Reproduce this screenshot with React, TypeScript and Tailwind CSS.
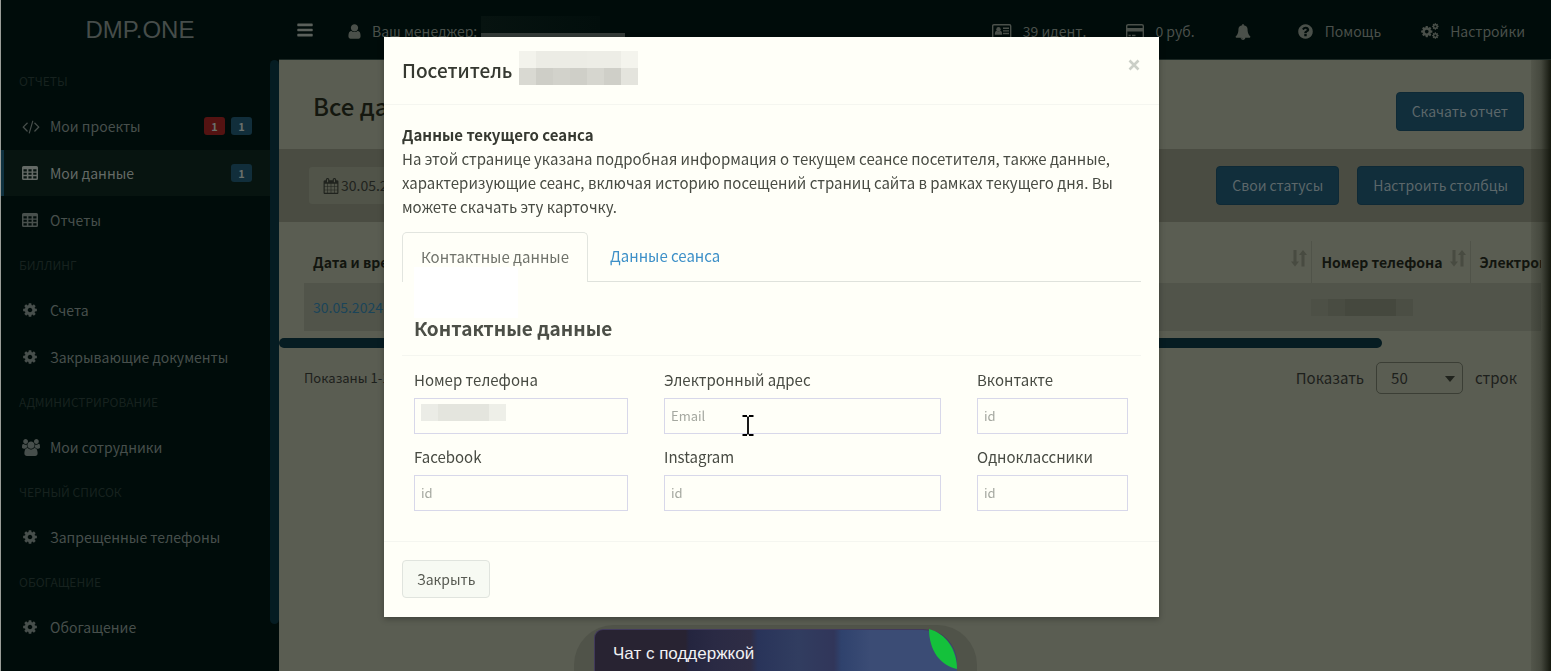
import { useState } from "react";
import type { ReactNode } from "react";
import clsx from "clsx";

const COG =
  "M1152 896q0-106-75-181t-181-75-181 75-75 181 75 181 181 75 181-75 75-181zm512-109v222q0 12-8 23t-20 13l-185 28q-19 54-39 91 35 50 107 138 10 12 10 25t-9 23q-27 37-99 108t-94 71q-12 0-26-9l-138-108q-44 23-91 38-16 136-29 186-7 28-36 28h-222q-14 0-24.5-8.5t-11.5-21.5l-28-184q-49-16-90-37l-141 107q-10 9-25 9-14 0-25-11-126-114-165-168-7-10-7-23 0-12 8-23 15-21 51-66.5t54-70.5q-27-50-41-99l-183-27q-13-2-21-12.5t-8-23.5v-222q0-12 8-23t19-13l186-28q14-46 39-92-40-57-107-138-10-12-10-24 0-10 9-23 26-36 98.5-107.5t94.5-71.5q13 0 26 10l138 107q44-23 91-38 16-136 29-186 7-28 36-28h222q14 0 24.5 8.5t11.5 21.5l28 184q49 16 90 37l142-107q9-9 24-9 13 0 25 10 129 119 165 170 7 8 7 22 0 12-8 23-15 21-51 66.5t-54 70.5q26 50 41 98l183 28q13 2 21 12.5t8 23.5z";

const PATHS = {
  cog: COG,
  bars: "M1664 1344v128q0 26-19 45t-45 19h-1408q-26 0-45-19t-19-45v-128q0-26 19-45t45-19h1408q26 0 45 19t19 45zm0-512v128q0 26-19 45t-45 19h-1408q-26 0-45-19t-19-45v-128q0-26 19-45t45-19h1408q26 0 45 19t19 45zm0-512v128q0 26-19 45t-45 19h-1408q-26 0-45-19t-19-45v-128q0-26 19-45t45-19h1408q26 0 45 19t19 45z",
  user: "M1536 1399q0 109-62.5 187t-150.5 78h-854q-88 0-150.5-78t-62.5-187q0-85 8.5-160.5t31.5-152 58.5-131 94-89 134.5-34.5q131 128 313 128t313-128q76 0 134.5 34.5t94 89 58.5 131 31.5 152 8.5 160.5zm-256-887q0 159-112.5 271.5t-271.5 112.5-271.5-112.5-112.5-271.5 112.5-271.5 271.5-112.5 271.5 112.5 112.5 271.5z",
  users:
    "M593 896q-162 5-265 128h-134q-82 0-138-40.5t-56-118.5q0-353 124-353 6 0 43.5 21t97.5 42.5 119 21.5q67 0 133-23-5 37-5 66 0 143 81 259zm1071 637q0 120-73 189.5t-194 69.5h-874q-121 0-194-69.5t-73-189.5q0-53 3.5-103.5t14-109 26.5-108.5 43-97.5 62-81 85.5-53.5 111.5-20q10 0 43 21.5t73 48 107 48 135 21.5 135-21.5 107-48 73-48 43-21.5q61 0 111.5 20t85.5 53.5 62 81 43 97.5 26.5 108.5 14 109 3.5 103.5zm-1024-1277q0 106-75 181t-181 75-181-75-75-181 75-181 181-75 181 75 75 181zm704 384q0 159-112.5 271.5t-271.5 112.5-271.5-112.5-112.5-271.5 112.5-271.5 271.5-112.5 271.5 112.5 112.5 271.5zm576 225q0 78-56 118.5t-138 40.5h-134q-103-123-265-128 81-116 81-259 0-29-5-66 66 23 133 23 59 0 119-21.5t97.5-42.5 43.5-21q124 0 124 353zm-128-609q0 106-75 181t-181 75-181-75-75-181 75-181 181-75 181 75 75 181z",
  bell: "M912 1696q0-16-16-16-59 0-101.5-42.5t-42.5-101.5q0-16-16-16t-16 16q0 73 51.5 124.5t124.5 51.5q16 0 16-16zm816-288q0 52-38 90t-90 38h-448q0 106-75 181t-181 75-181-75-75-181h-448q-52 0-90-38t-38-90q50-42 91-88t85-119.5 74.5-158.5 50-206 19.5-260q0-152 117-282.5t307-158.5q-8-19-8-39 0-40 28-68t68-28 68 28 28 68q0 20-8 39 190 28 307 158.5t117 282.5q0 139 19.5 260t50 206 74.5 158.5 85 119.5 91 88z",
  question:
    "M1024 1376v-192q0-14-9-23t-23-9h-192q-14 0-23 9t-9 23v192q0 14 9 23t23 9h192q14 0 23-9t9-23zm256-672q0-88-55.5-163t-138.5-116-170-41q-243 0-371 213-15 24 8 42l132 100q7 6 19 6 16 0 25-12 53-68 86-92 34-24 86-24 48 0 85.5 26t37.5 59q0 38-20 61t-68 45q-63 28-115.5 86.5t-52.5 125.5v36q0 14 9 23t23 9h192q14 0 23-9t9-23q0-19 21.5-49.5t54.5-49.5q32-18 49-28.5t46-35 44.5-48 28-60.5 12.5-81zm384 192q0 209-103 385.5t-279.5 279.5-385.5 103-385.5-103-279.5-279.5-103-385.5 103-385.5 279.5-279.5 385.5-103 385.5 103 279.5 279.5 103 385.5z",
  code: "M617 1399l-50 50q-10 10-23 10t-23-10l-466-466q-10-10-10-23t10-23l466-466q10-10 23-10t23 10l50 50q10 10 10 23t-10 23l-393 393 393 393q10 10 10 23t-10 23zm591-1067l-373 1291q-4 13-15.5 19.5t-23.5 2.5l-62-17q-13-4-19.5-15.5t-2.5-24.5l373-1291q4-13 15.5-19.5t23.5-2.5l62 17q13 4 19.5 15.5t2.5 24.5zm657 651l-466 466q-10 10-23 10t-23-10l-50-50q-10-10-10-23t10-23l393-393-393-393q-10-10-10-23t10-23l50-50q10-10 23-10t23 10l466 466q10 10 10 23t-10 23z",
  calendar:
    "M192 1664h288v-288h-288v288zm352 0h320v-288h-320v288zm-352-352h288v-320h-288v320zm352 0h320v-320h-320v320zm-352-384h288v-288h-288v288zm736 736h320v-288h-320v288zm-384-736h320v-288h-320v288zm768 736h288v-288h-288v288zm-384-352h320v-320h-320v320zm-352-864v-288q0-13-9.5-22.5t-22.5-9.5h-64q-13 0-22.5 9.5t-9.5 22.5v288q0 13 9.5 22.5t22.5 9.5h64q13 0 22.5-9.5t9.5-22.5zm736 864h288v-320h-288v320zm-384-384h320v-288h-320v288zm384 0h288v-288h-288v288zm32-480v-288q0-13-9.5-22.5t-22.5-9.5h-64q-13 0-22.5 9.5t-9.5 22.5v288q0 13 9.5 22.5t22.5 9.5h64q13 0 22.5-9.5t9.5-22.5zm384-64v1280q0 52-38 90t-90 38h-1408q-52 0-90-38t-38-90v-1280q0-52 38-90t90-38h128v-96q0-66 47-113t113-47h64q66 0 113 47t47 113v96h384v-96q0-66 47-113t113-47h64q66 0 113 47t47 113v96h128q52 0 90 38t38 90z",
};

type IconName = keyof typeof PATHS;

function Icon({ name, className }: { name: IconName; className?: string }) {
  const wide = name === "users" || name === "code";
  return (
    <svg
      viewBox={wide ? "0 0 1920 1792" : "0 0 1792 1792"}
      className={clsx("shrink-0", className)}
      fill="currentColor"
      aria-hidden="true"
    >
      <path d={PATHS[name]} />
    </svg>
  );
}

function TableIcon() {
  return (
    <svg viewBox="0 0 16 14" className="h-[14px] w-4 shrink-0" aria-hidden="true">
      <path
        fill="currentColor"
        fillRule="evenodd"
        d="M1.500 0h13A1.500 1.500 0 0 1 16 1.500v11a1.500 1.500 0 0 1-1.500 1.500h-13A1.500 1.500 0 0 1 0 12.500v-11A1.500 1.500 0 0 1 1.500 0zM1.500 3.200v2.200h3.300V3.200zm4.900 0v2.200h3.200V3.200zm4.800 0v2.200h3.300V3.200zM1.500 6.800v2h3.300v-2zm4.900 0v2h3.200v-2zm4.800 0v2h3.300v-2zM1.500 10.300v2.200h3.300v-2.200zm4.900 0v2.200h3.200v-2.200zm4.800 0v2.200h3.300v-2.200z"
      />
    </svg>
  );
}

function IdCardIcon() {
  return (
    <svg viewBox="0 0 20 16" className="h-4 w-5 shrink-0" aria-hidden="true">
      <rect x="0.700" y="0.700" width="18" height="14" rx="1.200" fill="none" stroke="currentColor" strokeWidth="1.400" />
      <g fill="currentColor">
        <circle cx="6.500" cy="5.300" r="2.200" />
        <path d="M2.800 10.800c0-2.800.8-4.100 2-4.100.9.900 2.500.9 3.400 0 1.200 0 2 1.300 2 4.100z" />
        <path d="M11 3.600h6v1.400h-6zM11 6.200h6v1.400h-6zM11 8.800h6v1.400h-6z" />
      </g>
    </svg>
  );
}

function CreditCardIcon() {
  return (
    <svg viewBox="0 0 18 16" className="h-4 w-[18px] shrink-0" aria-hidden="true">
      <rect x="0.700" y="0.700" width="16.600" height="14" rx="1.400" fill="none" stroke="currentColor" strokeWidth="1.400" />
      <path fill="currentColor" d="M1 4h16v3.500H1zM2.500 10.800h2.300v1.400H2.500zM6 10.800h3.500v1.400H6z" />
    </svg>
  );
}

function CogsIcon() {
  return (
    <svg viewBox="0 0 18 17" className="h-[17px] w-[18px] shrink-0" fill="currentColor" aria-hidden="true">
      <path d={COG} transform="translate(-0.800 2) scale(0.0073)" />
      <path d={COG} transform="translate(10.600 -0.300) scale(0.0042)" />
      <path d={COG} transform="translate(10.600 8.800) scale(0.0042)" />
    </svg>
  );
}

function SortIcon() {
  return (
    <svg viewBox="0 0 16 17" className="h-[17px] w-4 shrink-0 text-[#484b41]" aria-hidden="true">
      <path
        fill="currentColor"
        d="M2.500 0h3v11.500H8L4 16.500 0 11.500h2.500zM10.500 16.500h3V5H16L12 0 8 5h2.500z"
      />
    </svg>
  );
}

type Badge = { text: string; tone: "red" | "blue" };

type MenuItem = {
  label: string;
  icon: IconName | "table";
  active?: boolean;
  badges?: Badge[];
};

const menu: { title: string; items: MenuItem[] }[] = [
  {
    title: "ОТЧЕТЫ",
    items: [
      {
        label: "Мои проекты",
        icon: "code",
        badges: [
          { text: "1", tone: "red" },
          { text: "1", tone: "blue" },
        ],
      },
      {
        label: "Мои данные",
        icon: "table",
        active: true,
        badges: [{ text: "1", tone: "blue" }],
      },
      { label: "Отчеты", icon: "table" },
    ],
  },
  {
    title: "БИЛЛИНГ",
    items: [
      { label: "Счета", icon: "cog" },
      { label: "Закрывающие документы", icon: "cog" },
    ],
  },
  { title: "АДМИНИСТРИРОВАНИЕ", items: [{ label: "Мои сотрудники", icon: "users" }] },
  { title: "ЧЕРНЫЙ СПИСОК", items: [{ label: "Запрещенные телефоны", icon: "cog" }] },
  { title: "ОБОГАЩЕНИЕ", items: [{ label: "Обогащение", icon: "cog" }] },
];

function Sidebar() {
  return (
    <aside className="flex w-[279px] shrink-0 flex-col border-l border-[#9a9d98] bg-[#000c0a]">
      <a
        href="#"
        className="flex h-[59px] items-center justify-center font-['Liberation_Sans',sans-serif] text-2xl text-[#464d4a]"
      >
        DMP.ONE
      </a>
      <div className="flex flex-1 items-start">
        <nav className="min-w-0 flex-1">
          {menu.map((group) => (
            <section key={group.title}>
              <h2 className="flex h-11 items-center pl-[18px] text-[12px] text-[#17221f]">
                {group.title}
              </h2>
              <ul className="flex flex-col gap-px">
                {group.items.map((item) => (
                  <li key={item.label}>
                    <a
                      href="#"
                      className={clsx(
                        "flex h-[46px] items-center border-l-[3px] pr-[18px] pl-[18px] text-[14px]",
                        item.active
                          ? "border-[#0f3240] bg-[#071410] text-[#646a66]"
                          : "border-transparent text-[#474f4c]",
                      )}
                    >
                      <span className="flex w-7 items-center">
                        {item.icon === "table" ? (
                          <TableIcon />
                        ) : (
                          <Icon
                            name={item.icon}
                            className={item.icon === "cog" ? "h-4 w-4" : "h-[17px] w-[18px]"}
                          />
                        )}
                      </span>
                      <span className="flex-1 whitespace-nowrap">{item.label}</span>
                      <span className="flex gap-1.5">
                        {item.badges?.map((badge) => (
                          <span
                            key={badge.tone}
                            className={clsx(
                              "flex h-[18px] w-[21px] items-center justify-center rounded-[3px] text-[11px] font-bold text-[#6a706c]",
                              badge.tone === "red" ? "bg-[#541312]" : "bg-[#112e3b]",
                            )}
                          >
                            {badge.text}
                          </span>
                        ))}
                      </span>
                    </a>
                  </li>
                ))}
              </ul>
            </section>
          ))}
        </nav>
        <div className="mt-px h-[564px] w-[9px] rounded-full bg-[#051c22]" />
      </div>
    </aside>
  );
}

function HeaderLink({ icon, children }: { icon: ReactNode; children: ReactNode }) {
  return (
    <a href="#" className="flex items-center gap-[11px] whitespace-nowrap">
      {icon}
      {children}
    </a>
  );
}

function Header() {
  return (
    <header className="flex h-[59px] items-center bg-[#000c0a] pt-1 pr-[26px] pl-[17px] text-[14px] text-[#4a504a]">
      <button type="button" aria-label="Меню" className="pb-[3px] text-[#5a605b]">
        <Icon name="bars" className="h-[18px] w-[18px]" />
      </button>
      <div className="ml-8 flex items-center gap-[9px] whitespace-nowrap">
        <Icon name="user" className="h-[17px] w-[17px]" />
        Ваш менеджер:
      </div>
      <div className="mt-3 ml-1 h-[21px] w-36 self-start border-b-4 border-[#343b38]">
        <div className="h-full w-[119px] bg-linear-to-r from-[#071310] to-[#020e0c]" />
      </div>
      <div className="ml-auto flex items-center gap-10">
        <HeaderLink icon={<IdCardIcon />}>39 идент.</HeaderLink>
        <HeaderLink icon={<CreditCardIcon />}>0 руб.</HeaderLink>
        <button type="button" aria-label="Уведомления" className="mr-1.5">
          <Icon name="bell" className="h-4 w-4" />
        </button>
        <HeaderLink icon={<Icon name="question" className="h-[17px] w-[17px]" />}>Помощь</HeaderLink>
        <HeaderLink icon={<CogsIcon />}>Настройки</HeaderLink>
      </div>
    </header>
  );
}

function BlueButton({ children }: { children: ReactNode }) {
  return (
    <button
      type="button"
      className="h-[39px] rounded-[4px] border border-[#0e2936] bg-[#112e3b] px-[15px] text-[14px] whitespace-nowrap text-[#5c676a]"
    >
      {children}
    </button>
  );
}

function Content() {
  return (
    <main className="relative flex-1 border-t border-[#1b2723] bg-[#5a5d52] text-[#1d201c]">
      <div className="flex h-[89px] items-start justify-between pt-7 pr-[27px] pl-[34px]">
        <h1 className="text-2xl leading-9 font-medium whitespace-nowrap text-[#14170f]">
          Все данные
        </h1>
        <div className="pt-1">
          <BlueButton>Скачать отчет</BlueButton>
        </div>
      </div>

      <div className="flex h-[73px] items-center gap-[18px] bg-[#4a4c42] pr-[27px] pl-[30px]">
        <button
          type="button"
          className="mr-auto flex h-[37px] items-center gap-0.5 rounded-[3px] bg-[#515449] px-[14px] text-[14px] whitespace-nowrap text-[#20231e]"
        >
          <Icon name="calendar" className="h-4 w-4" />
          30.05.2024
        </button>
        <BlueButton>Свои статусы</BlueButton>
        <BlueButton>Настроить столбцы</BlueButton>
      </div>

      <div className="mr-[10px] ml-[25px] overflow-hidden pt-[19px]">
        <table className="w-full table-fixed text-left text-[14px] whitespace-nowrap">
          <thead>
            <tr className="h-[42px] text-[#12150f]">
              <th className="px-[9px] font-bold">Дата и время</th>
              <th className="border-r border-[#505349] pr-1">
                <div className="-mt-2 flex justify-end">
                  <SortIcon />
                </div>
              </th>
              <th className="w-[159px] border-r border-[#505349] pr-1 pl-[10px] font-bold">
                <div className="flex justify-between">
                  Номер телефона
                  <span className="-mt-0.5">
                    <SortIcon />
                  </span>
                </div>
              </th>
              <th className="w-[71px] overflow-hidden pl-[9px] font-bold">Электронный адрес</th>
            </tr>
          </thead>
          <tbody>
            <tr className="h-12 bg-[#51544a]">
              <td className="px-[9px]">
                <a href="#" className="text-[#1b4459]">
                  30.05.2024
                </a>
              </td>
              <td />
              <td>
                <div className="flex h-[17px] w-[102px]">
                  <span className="w-[17px] bg-[#4d5046]" />
                  <span className="w-[17px] bg-[#494c42]" />
                  <span className="w-[51px] bg-[#45483e]" />
                  <span className="w-[17px] bg-[#4b4e44]" />
                </div>
              </td>
              <td />
            </tr>
          </tbody>
        </table>
      </div>

      <div className="mt-[7px] mr-[169px] h-[10px] rounded-full bg-[#061c22]" />

      <div className="mt-[14px] flex items-center pr-[34px] pl-[25px] whitespace-nowrap">
        <p className="mr-auto text-[13px]">Показаны 1-1 из 1</p>
        <label htmlFor="page-size" className="text-[15px]">
          Показать
        </label>
        <div className="relative mx-3">
          <select
            id="page-size"
            className="h-8 w-[87px] appearance-none rounded-[5px] border border-[#3b3e35] bg-[#5a5d52] pl-[14px] text-[15px]"
          >
            <option>50</option>
            <option>100</option>
          </select>
          <svg
            viewBox="0 0 10 6"
            className="pointer-events-none absolute top-[14px] right-2 h-1.5 w-[10px]"
            aria-hidden="true"
          >
            <path d="M0 0h10L5 6z" fill="#20231d" />
          </svg>
        </div>
        <span className="text-[15px]">строк</span>
      </div>

      <div className="pointer-events-none absolute inset-y-0 right-0 w-5 bg-linear-to-r from-[#14170e]/10 via-[#14170e]/30 via-50% to-[#14170e]" />
    </main>
  );
}

const fields = [
  { id: "phone", label: "Номер телефона", placeholder: "" },
  { id: "email", label: "Электронный адрес", placeholder: "Email" },
  { id: "vk", label: "Вконтакте", placeholder: "id" },
  { id: "facebook", label: "Facebook", placeholder: "id" },
  { id: "instagram", label: "Instagram", placeholder: "id" },
  { id: "ok", label: "Одноклассники", placeholder: "id" },
];

function TextCursor() {
  return (
    <svg
      viewBox="0 0 12 21"
      className="pointer-events-none absolute top-[17px] left-[78px] z-10 h-[21px] w-3"
      aria-hidden="true"
    >
      <path d="M0.500 1H5M7 1h4.500M0.500 20H5M7 20h4.500M6 1.500v18" stroke="#000" strokeWidth="1.800" fill="none" />
    </svg>
  );
}

function VisitorModal() {
  const [tab, setTab] = useState("contacts");

  return (
    <div className="fixed inset-0 flex items-start justify-center pt-[37px] pr-2">
      <div
        role="dialog"
        aria-labelledby="visitor-title"
        className="w-full max-w-[775px] bg-[#fffff8] text-[15px] text-[#484b43] shadow-[0_2px_6px_rgba(0,0,0,0.3)]"
      >
        <div className="flex h-[68px] items-center border-b border-[#f5f6f0] px-[18px]">
          <h2 id="visitor-title" className="text-[19px] font-medium text-[#363931]">
            Посетитель
          </h2>
          <div className="mb-1.5 ml-1.5 grid h-[34px] w-[119px] grid-cols-7">
            <span className="bg-[#f3f3ec]" />
            <span className="col-span-3 bg-[#ecece5]" />
            <span className="col-span-2 bg-[#edede6]" />
            <span className="bg-[#f4f4ed]" />
            <span className="bg-[#d9d9d2]" />
            <span className="bg-[#cecec7]" />
            <span className="bg-[#d2d2cb]" />
            <span className="bg-[#cfcfc8]" />
            <span className="bg-[#d6d6cf]" />
            <span className="bg-[#cfcfc8]" />
            <span className="bg-[#e4e4dd]" />
          </div>
          <button type="button" aria-label="Закрыть окно" className="mb-3 ml-auto">
            <svg viewBox="0 0 14 14" className="h-[14px] w-[14px]" aria-hidden="true">
              <path d="M2.500 2.500l9 9M11.500 2.500l-9 9" stroke="#cbcfc7" strokeWidth="2.600" />
            </svg>
          </button>
        </div>

        <div className="px-[18px] pt-[18px]">
          <p className="leading-6 font-bold text-[#363931]">Данные текущего сеанса</p>
          <p className="leading-6">
            На этой странице указана подробная информация о текущем сеансе посетителя, также данные,
            характеризующие сеанс, включая историю посещений страниц сайта в рамках текущего дня. Вы
            можете скачать эту карточку.
          </p>

          <div role="tablist" className="relative mt-[13px] flex h-[50px] border-b border-[#dfe2dc]">
            <button
              type="button"
              role="tab"
              aria-selected={tab === "contacts"}
              onClick={() => setTab("contacts")}
              className="-mb-px rounded-t-[5px] border border-b-0 border-[#e2e5df] bg-[#fffff8] px-[18px] text-[#70736b]"
            >
              Контактные данные
            </button>
            <button
              type="button"
              role="tab"
              aria-selected={tab === "session"}
              onClick={() => setTab("session")}
              className="px-[22px] text-[#3d90c8]"
            >
              Данные сеанса
            </button>
            <div className="absolute top-[35px] left-3 h-[51px] w-[104px] bg-white" />
          </div>

          <h3 className="relative mt-[31px] border-b border-[#f5f6f0] pb-3 pl-3 text-[19px] leading-[30px] font-bold text-[#4c4f47]">
            Контактные данные
          </h3>

          <div className="grid grid-cols-[214fr_277fr_151fr] gap-x-9 gap-y-[11px] pt-3 pr-[13px] pb-[30px] pl-3">
            {fields.map((field) => (
              <div key={field.id} className="min-w-0">
                <label htmlFor={field.id} className="block leading-6">
                  {field.label}
                </label>
                <div className="relative mt-1.5">
                  <input
                    id={field.id}
                    type="text"
                    placeholder={field.placeholder}
                    className="block h-9 w-full border border-[#d8d8ea] bg-[#fffff8] px-1.5 pb-0.5 text-[13px] placeholder:text-[#a5a8a0]"
                  />
                  {field.id === "phone" && (
                    <div className="absolute top-1.5 left-[7px] flex h-[17px] w-[85px]">
                      <span className="w-[17px] bg-[#ebece6]" />
                      <span className="w-[51px] bg-[#e4e5de]" />
                      <span className="w-[17px] bg-[#eeefe8]" />
                    </div>
                  )}
                  {field.id === "email" && <TextCursor />}
                </div>
              </div>
            ))}
          </div>
        </div>

        <div className="flex h-[76px] items-center border-t border-[#f5f6f0] px-[18px] pb-px">
          <button
            type="button"
            className="h-[38px] rounded-[4px] border border-[#e0e4de] bg-[#f7faf3] px-[14px] text-[14px] text-[#575a52]"
          >
            Закрыть
          </button>
        </div>
      </div>
    </div>
  );
}

function ChatWidget() {
  return (
    <div className="fixed inset-x-0 bottom-0 flex justify-center">
      <div className="h-[46px] rounded-t-[40px] bg-[#505349] px-5 pt-1">
        <button
          type="button"
          className="relative flex h-[42px] w-[363px] items-center rounded-tl-[9px] rounded-tr-[34px] border-t border-l border-[#41395c] bg-[linear-gradient(90deg,#282332_25%,#24253f_26%,#2a2a44_33%,#2f2d45_43%,#29345a_45%,#313d60_56%,#31365a_66%,#2f426d_68%,#3b4c75_76%)] pt-1.5 pl-[18px] font-['Liberation_Sans',sans-serif] text-[17px] text-[#f1f1f4]"
        >
          Чат с поддержкой
          <svg
            viewBox="0 0 28 40"
            className="absolute -top-px right-0 h-10 w-7"
            aria-hidden="true"
          >
            <path d="M0 0C16 4 28 20 28 40C12 37 0 22 0 0z" fill="#14c13b" />
          </svg>
        </button>
      </div>
    </div>
  );
}

export default function App() {
  return (
    <div className="flex min-h-screen bg-[#000c0a] font-['Noto_Sans_CJK_SC',sans-serif]">
      <Sidebar />
      <div className="flex min-w-0 flex-1 flex-col">
        <Header />
        <Content />
      </div>
      <ChatWidget />
      <VisitorModal />
    </div>
  );
}
